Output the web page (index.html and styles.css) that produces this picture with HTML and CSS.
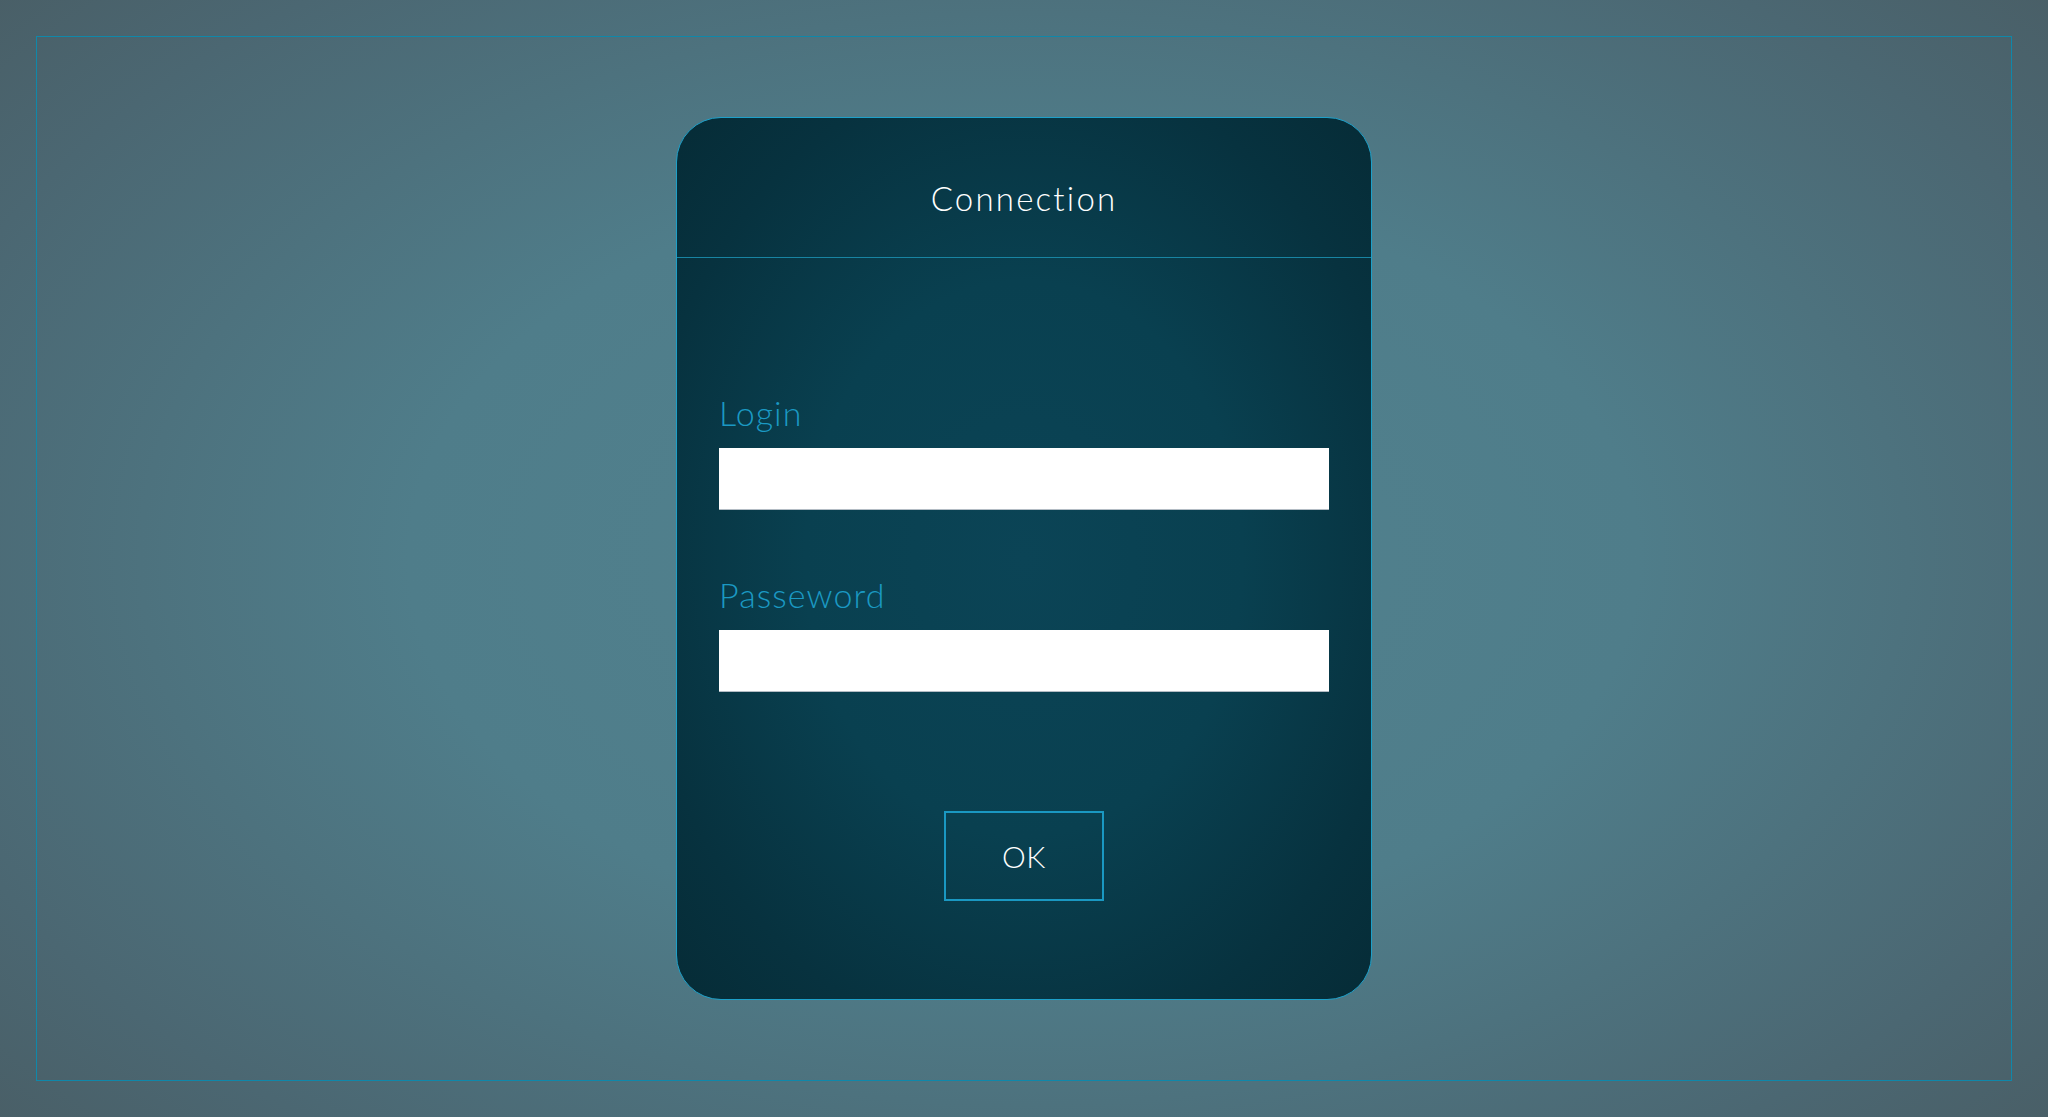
FILE: index.html
```html
<!DOCTYPE html>
<html lang="en">
<head>
<meta charset="utf-8">
<title>Connection</title>
<link rel="stylesheet" href="styles.css">
</head>
<body>
<div class="page">
  <div class="frame">
    <form class="card" onsubmit="return false;">
      <div class="card-header">
        <h1 class="title">Connection</h1>
      </div>
      <div class="card-body">
        <label class="field-label" for="login">Login</label>
        <input class="field-input" id="login" type="text">
        <label class="field-label second" for="password">Passeword</label>
        <input class="field-input" id="password" type="password">
        <div class="actions">
          <button class="ok-btn" type="submit">OK</button>
        </div>
      </div>
    </form>
  </div>
</div>
</body>
</html>
```

FILE: styles.css
```css
* { box-sizing: border-box; }

html, body {
  margin: 0;
  padding: 0;
  width: 100%;
  height: 100%;
}

body {
  font-family: "Lato", "Open Sans", "Liberation Sans", sans-serif;
  background: radial-gradient(ellipse 75% 85% at 50% 50%, #51828f 0%, #4f7d8a 40%, #4b6772 75%, #48595f 100%);
}

.page {
  width: 100%;
  height: 100%;
  padding: 36px;
}

.frame {
  width: 100%;
  height: 100%;
  border: 1px solid #0f88aa;
  display: flex;
  align-items: center;
  justify-content: center;
}

.card {
  width: 696px;
  height: 883px;
  border: 1px solid #1da0c9;
  border-radius: 45px;
  background: radial-gradient(ellipse 70% 70% at 50% 50%, #0b4456 0%, #094050 45%, #07323f 80%, #062c37 100%);
  display: flex;
  flex-direction: column;
  overflow: hidden;
}

.card-header {
  height: 140px;
  border-bottom: 1px solid #1884a2;
  padding-top: 60px;
  text-align: center;
}

.title {
  margin: 0;
  font-size: 33px;
  line-height: 40px;
  font-weight: 300;
  color: #ffffff;
  letter-spacing: 2.2px;
}

.card-body {
  flex: 1;
  padding: 135px 42px 0 42px;
  display: flex;
  flex-direction: column;
}

.field-label {
  display: block;
  font-size: 34px;
  line-height: 40px;
  font-weight: 300;
  color: #1b99c3;
  letter-spacing: 1.1px;
  margin-bottom: 15px;
}

.field-label.second {
  margin-top: 65px;
}

.field-input {
  display: block;
  width: 610px;
  height: 62px;
  margin: 0;
  padding: 0 12px;
  border: none;
  border-bottom: 1px solid #b3bcc4;
  background: #ffffff;
  font-family: inherit;
  font-size: 24px;
  outline: none;
}

.actions {
  display: flex;
  justify-content: center;
  margin-top: 119px;
}

.ok-btn {
  width: 160px;
  height: 90px;
  border: 2px solid #1a98c2;
  background: transparent;
  color: #ffffff;
  font-family: inherit;
  font-size: 30px;
  font-weight: 300;
  letter-spacing: 0.5px;
  padding: 0;
  cursor: pointer;
}
```
